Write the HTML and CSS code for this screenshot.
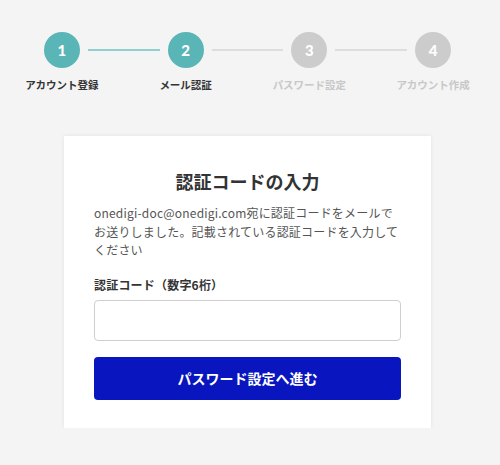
FILE: index.html
```html
<!DOCTYPE html>
<html lang="ja">
<head>
<meta charset="utf-8">
<title>認証コードの入力</title>
<link rel="stylesheet" href="styles.css">
</head>
<body>
<div class="page">
  <ol class="stepper">
    <li class="step done"><span class="num">1</span><span class="label">アカウント登録</span></li>
    <li class="step current"><span class="num">2</span><span class="label">メール認証</span></li>
    <li class="step"><span class="num">3</span><span class="label">パスワード設定</span></li>
    <li class="step"><span class="num">4</span><span class="label">アカウント作成</span></li>
  </ol>
  <main class="card">
    <h1 class="title">認証コードの入力</h1>
    <p class="desc">onedigi-doc@onedigi.com宛に認証コードをメールでお送りしました。記載されている認証コードを入力してください</p>
    <label class="field-label" for="code">認証コード（数字6桁）</label>
    <input class="input" id="code" type="text">
    <button class="btn" type="button">パスワード設定へ進む</button>
  </main>
</div>
</body>
</html>
```
FILE: styles.css
```css
html, body {
  margin: 0;
  padding: 0;
  background: #f4f4f4;
}
body {
  font-family: "Noto Sans CJK JP", "Noto Sans", sans-serif;
  color: #333;
}
.page {
  width: 495px;
  padding-top: 32px;
}
.stepper {
  list-style: none;
  margin: 0;
  padding: 0;
  display: flex;
}
.step {
  flex: 1;
  position: relative;
  display: flex;
  flex-direction: column;
  align-items: center;
}
.step:not(:last-child)::after {
  content: "";
  position: absolute;
  top: 17px;
  left: calc(50% + 26px);
  right: calc(-50% + 26px);
  height: 2px;
  background: #dddddd;
}
.step.done::after {
  background: #8ed0cf;
}
.num {
  width: 36px;
  height: 36px;
  border-radius: 50%;
  background: #cccccc;
  color: #fff;
  font-family: "Lato", "Open Sans", sans-serif;
  font-weight: 900;
  font-size: 15px;
  display: flex;
  align-items: center;
  justify-content: center;
}
.step.done .num,
.step.current .num {
  background: #5ab5b7;
}
.label {
  margin-top: 10px;
  font-size: 10.5px;
  line-height: 14px;
  font-weight: 700;
  color: #c8c8c8;
}
.step.done .label,
.step.current .label {
  color: #333;
}
.card {
  width: 367px;
  box-sizing: border-box;
  margin: 44px auto 0;
  background: #fff;
  padding: 32px 30px 28px;
  box-shadow: 0 0 4px rgba(0, 0, 0, 0.08);
  display: flex;
  flex-direction: column;
}
.title {
  margin: 0 0 10px;
  font-size: 18px;
  line-height: 26px;
  font-weight: 700;
  text-align: center;
  color: #333;
}
.desc {
  margin: 0;
  font-size: 12px;
  letter-spacing: 0.2px;
  line-height: 18.5px;
  color: #555;
}
.field-label {
  margin-top: 16px;
  font-size: 12px;
  letter-spacing: 0.2px;
  line-height: 18px;
  font-weight: 700;
  color: #333;
}
.input {
  margin-top: 6px;
  height: 41px;
  box-sizing: border-box;
  border: 1px solid #cfcfcf;
  border-radius: 4px;
  background: #fff;
  font-size: 14px;
  padding: 0 10px;
}
.btn {
  margin-top: 16px;
  height: 43px;
  border: none;
  border-radius: 4px;
  background: #0915be;
  color: #fff;
  font-family: "Noto Sans CJK JP", sans-serif;
  font-size: 14px;
  font-weight: 700;
}
```
